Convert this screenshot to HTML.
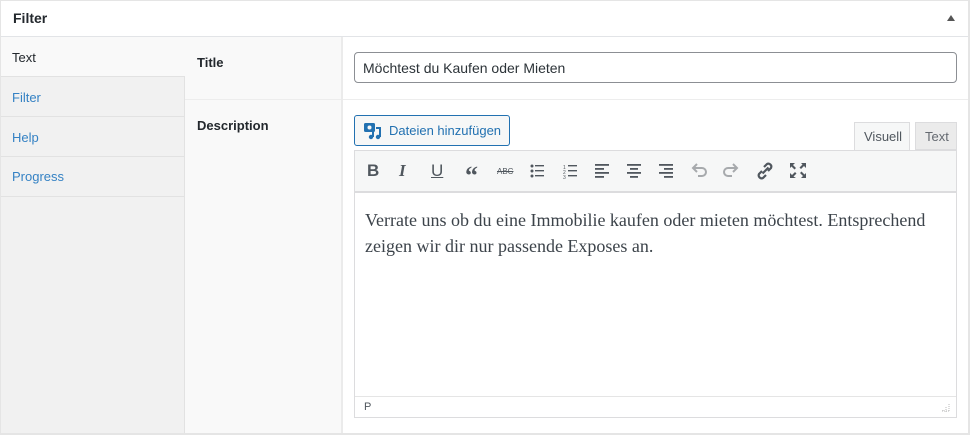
<!DOCTYPE html>
<html><head><meta charset="utf-8"><style>
*{box-sizing:border-box;margin:0;padding:0}
body{width:970px;height:435px;background:#fff;font-family:"Liberation Sans",sans-serif;position:relative;overflow:hidden}
.abs{position:absolute}
</style></head><body>
<div class="abs" style="left:0;top:0;width:970px;height:435px;border:1px solid #ddd;border-width:1px 2px 2px 1px;border-color:#e5e5e5"></div>
<div class="abs" style="left:1px;top:1px;width:967px;height:36px;background:#fff;border-bottom:1px solid #e2e4e7"></div>
<div class="abs" style="left:13px;top:10px;font-size:14px;font-weight:bold;color:#23282d">Filter</div>
<div class="abs" style="left:947px;top:15px;width:0;height:0;border-left:4px solid transparent;border-right:4px solid transparent;border-bottom:6px solid #555"></div>
<div class="abs" style="left:1px;top:37px;width:184px;height:396px;background:#f1f1f1;border-right:1px solid #e2e2e2"></div>
<div class="abs" style="left:1px;top:37px;width:340px;height:396px;background:#f9f9f9;"></div>
<div class="abs" style="left:1px;top:76px;width:184px;height:357px;background:#f1f1f1;border-right:1px solid #e2e2e2"></div>
<div class="abs" style="left:341px;top:37px;width:2px;height:396px;background:#ebebeb"></div>
<div class="abs" style="left:185px;top:99px;width:156px;height:1px;background:#ededed"></div>
<div class="abs" style="left:12px;top:50px;font-size:13px;color:#23282d">Text</div>
<div class="abs" style="left:1px;top:76px;width:184px;height:1px;background:#e2e2e2"></div>
<div class="abs" style="left:12px;top:90px;font-size:13px;color:#3582c4">Filter</div>
<div class="abs" style="left:1px;top:116px;width:184px;height:1px;background:#e2e2e2"></div>
<div class="abs" style="left:12px;top:130px;font-size:13px;color:#3582c4">Help</div>
<div class="abs" style="left:1px;top:156px;width:184px;height:1px;background:#e2e2e2"></div>
<div class="abs" style="left:12px;top:169px;font-size:13px;color:#3582c4">Progress</div>
<div class="abs" style="left:1px;top:196px;width:184px;height:1px;background:#e2e2e2"></div>
<div class="abs" style="left:197px;top:55px;font-size:13px;font-weight:bold;color:#23282d">Title</div>
<div class="abs" style="left:197px;top:118px;font-size:13px;font-weight:bold;color:#23282d">Description</div>
<div class="abs" style="left:343px;top:37px;width:625px;height:396px;background:#fff"></div>
<div class="abs" style="left:343px;top:99px;width:625px;height:1px;background:#ededed"></div>
<div class="abs" style="left:354px;top:52px;width:603px;height:31px;border:1px solid #8c8f94;border-radius:4px;font-size:14px;color:#2c3338;padding:7px 8px">Möchtest du Kaufen oder Mieten</div>
<div class="abs" style="left:354px;top:115px;width:156px;height:31px;border:1px solid #2271b1;border-radius:3px;background:#f6f7f7;font-size:13px;color:#2271b1;padding:7px 0 0 34px">Dateien hinzufügen</div>
<svg class="abs" style="left:363px;top:121px" width="20" height="20" viewBox="0 0 20 20"><rect x="1" y="2" width="11" height="9" rx="1.5" fill="#2271b1"/><circle cx="6.5" cy="6.5" r="2" fill="#f6f7f7"/><path d="M13 7h4v9" stroke="#2271b1" stroke-width="2" fill="none"/><circle cx="15" cy="16" r="2.2" fill="#2271b1"/><circle cx="8" cy="16" r="2.2" fill="#2271b1"/><path d="M10 9v7" stroke="#2271b1" stroke-width="2"/></svg>
<div class="abs" style="left:854px;top:122px;width:56px;height:29px;background:#f6f7f7;border:1px solid #dcdcde;border-bottom:none;font-size:13px;color:#50575e;padding:6px 0 0 9px">Visuell</div>
<div class="abs" style="left:915px;top:122px;width:42px;height:28px;background:#ebebeb;border:1px solid #dcdcde;font-size:13px;color:#646970;padding:6px 0 0 9px">Text</div>
<div class="abs" style="left:354px;top:150px;width:603px;height:268px;border:1px solid #dcdcde"></div>
<div class="abs" style="left:355px;top:151px;width:601px;height:42px;background:#f6f7f7;border-bottom:2px solid #dcdcde"></div>
<div class="abs" style="left:367px;top:160px;font-size:17px;color:#50575e;font-weight:bold;display:flex;align-items:center;height:22px">
<span style="width:32px">B</span><span style="width:32px;font-family:'Liberation Serif';font-style:italic">I</span><span style="width:34px;text-decoration:underline;font-weight:normal">U</span><span style="width:32px;font-family:'Liberation Serif';font-size:26px;margin-top:10px">“</span><span style="width:32px;font-size:8px;text-decoration:line-through;font-weight:normal">ABC</span>
</div>
<svg class="abs" style="left:528px;top:161px" width="290" height="20" viewBox="0 0 290 20" fill="#50575e">
<g><circle cx="4" cy="5" r="1.5"/><circle cx="4" cy="10" r="1.5"/><circle cx="4" cy="15" r="1.5"/><rect x="7" y="4" width="9" height="1.4"/><rect x="7" y="9" width="9" height="1.4"/><rect x="7" y="14" width="9" height="1.4"/></g>
<g transform="translate(35,0)"><text x="0" y="8" font-size="5">1</text><text x="0" y="13" font-size="5">2</text><text x="0" y="18" font-size="5">3</text><rect x="5" y="4" width="9" height="1.4"/><rect x="5" y="9" width="9" height="1.4"/><rect x="5" y="14" width="9" height="1.4"/></g>
<g transform="translate(67,0)"><rect x="0" y="3" width="14" height="1.8"/><rect x="0" y="7" width="9" height="1.8"/><rect x="0" y="11" width="14" height="1.8"/><rect x="0" y="15" width="9" height="1.8"/></g>
<g transform="translate(99,0)"><rect x="0" y="3" width="14" height="1.8"/><rect x="3" y="7" width="8" height="1.8"/><rect x="0" y="11" width="14" height="1.8"/><rect x="3" y="15" width="8" height="1.8"/></g>
<g transform="translate(131,0)"><rect x="0" y="3" width="14" height="1.8"/><rect x="5" y="7" width="9" height="1.8"/><rect x="0" y="11" width="14" height="1.8"/><rect x="5" y="15" width="9" height="1.8"/></g>
<g transform="translate(163,0)" stroke="#a7aaad" stroke-width="2" fill="none"><path d="M3 7h8a4 4 0 0 1 0 8H7"/><path d="M6 3L2 7l4 4"/></g>
<g transform="translate(195,0)" stroke="#a7aaad" stroke-width="2" fill="none"><path d="M13 7H5a4 4 0 0 0 0 8h4"/><path d="M10 3l4 4-4 4"/></g>
<g transform="translate(228,0)" stroke="#50575e" stroke-width="2.2" fill="none"><path d="M8 6l3-3a3 3 0 0 1 4 4l-3 3"/><path d="M10 14l-3 3a3 3 0 0 1-4-4l3-3"/><path d="M6.5 12.5l6-6"/></g>
<g transform="translate(261,0)"><path d="M1 2h5L4 4l3 3-1.5 1.5-3-3L1 7z M17 2v5l-2-2-3 3-1.5-1.5 3-3L12 2z M1 17v-5l2 2 3-3 1.5 1.5-3 3L7 17z M17 17h-5l2-2-3-3 1.5-1.5 3 3L17 12z"/></g>
</svg>
<div class="abs" style="left:365px;top:207px;width:585px;font-family:'Liberation Serif',serif;font-size:18px;line-height:26px;color:#3c434a">Verrate uns ob du eine Immobilie kaufen oder mieten möchtest. Entsprechend zeigen wir dir nur passende Exposes an.</div>
<div class="abs" style="left:355px;top:396px;width:601px;height:1px;background:#e5e5e5"></div>
<div class="abs" style="left:364px;top:401px;font-size:11px;color:#50575e">P</div>
<svg class="abs" style="left:941px;top:403px" width="10" height="10"><path d="M8 1v8M5 4v5M2 7v2M1 8h8" stroke="#bbb" stroke-dasharray="1 1"/></svg>
</body></html>
